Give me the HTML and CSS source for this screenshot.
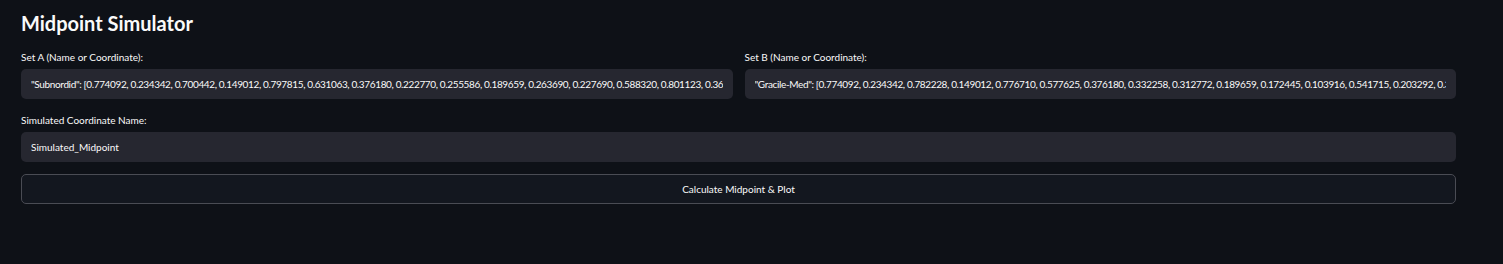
FILE: index.html
```html
<!DOCTYPE html>
<html>
<head>
    <title>Midpoint Simulator</title>
    <link rel="stylesheet" href="styles.css">
</head>
<body>
    <div class="main">
        <h1>Midpoint Simulator</h1>
        <div class="row">
            <div class="field">
                <label for="setA">Set A (Name or Coordinate):</label>
                <input type="text" class="coords" id="setA" value='"Subnordid": [0.774092, 0.234342, 0.700442, 0.149012, 0.797815, 0.631063, 0.376180, 0.222770, 0.255586, 0.189659, 0.263690, 0.227690, 0.588320, 0.801123, 0.364471, 0.112043, 0.401277]'>
            </div>
            <div class="field">
                <label for="setB">Set B (Name or Coordinate):</label>
                <input type="text" class="coords" id="setB" value='"Gracile-Med": [0.774092, 0.234342, 0.782228, 0.149012, 0.776710, 0.577625, 0.376180, 0.332258, 0.312772, 0.189659, 0.172445, 0.103916, 0.541715, 0.203292, 0.312044, 0.115803, 0.290114]'>
            </div>
        </div>
        <div class="field">
            <label for="simName">Simulated Coordinate Name:</label>
            <input type="text" id="simName" value="Simulated_Midpoint">
        </div>
        <button class="btn">Calculate Midpoint &amp; Plot</button>
    </div>
</body>
</html>
```

FILE: styles.css
```css
body { margin: 0; background-color: #0e1117; color: #fafafa; font-family: Lato, "Open Sans", sans-serif; }
.main { padding: 10px 47px 0 21px; }
h1 { font-size: 20px; font-weight: 700; margin: 0 0 15px 0; line-height: 26px; }
.row { display: grid; grid-template-columns: 1fr 1fr; gap: 12px; }
.field { display: flex; flex-direction: column; margin-bottom: 15px; }
label { font-size: 10px; line-height: 12px; margin-bottom: 6px; }
input { height: 30px; box-sizing: border-box; background-color: #262730; color: #fafafa; border: none; border-radius: 5px; padding: 0 10px; font-family: inherit; font-size: 10px; outline: none; }
.coords { letter-spacing: -0.36px; }
.btn { display: block; width: 100%; height: 30px; background-color: #13171f; color: #fafafa; border: 1px solid #4a4c54; border-radius: 5px; font-family: inherit; font-size: 10px; cursor: pointer; margin-top: -3px; }
```
